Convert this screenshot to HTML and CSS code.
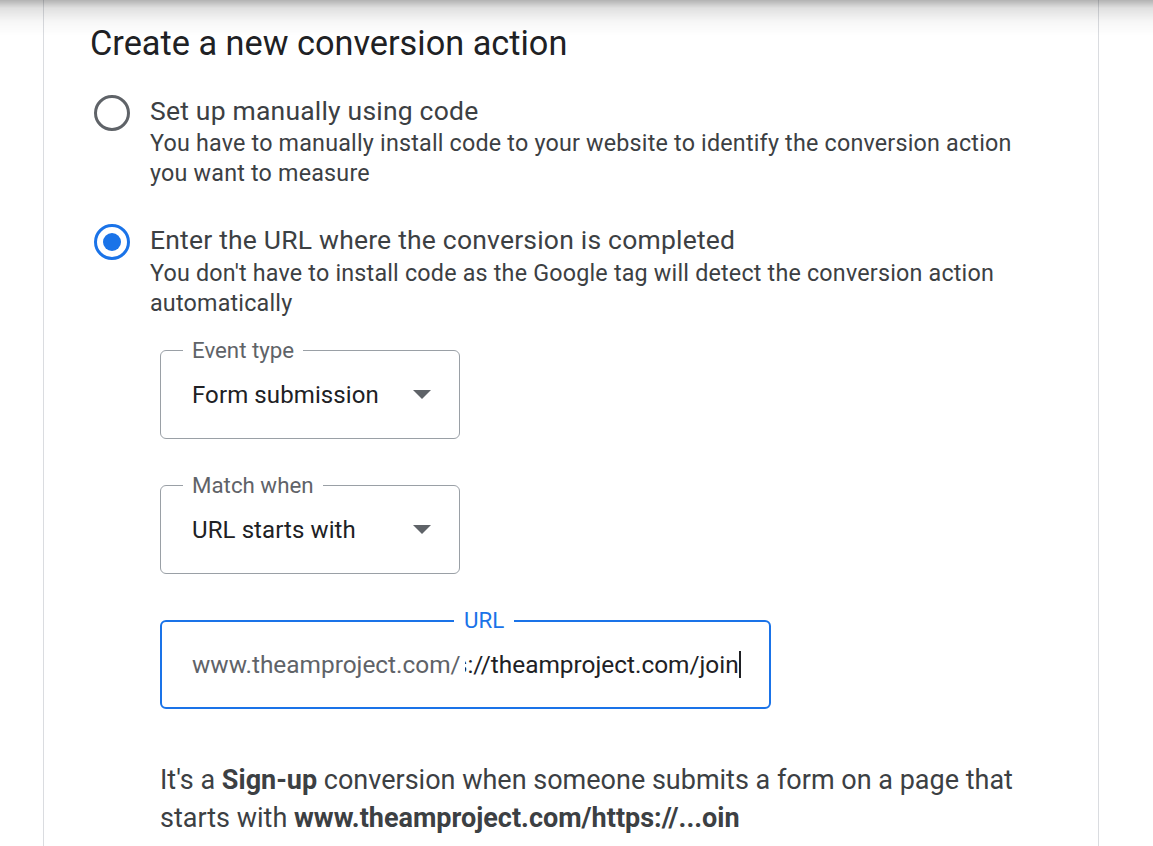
FILE: index.html
```html
<!DOCTYPE html>
<html lang="en">
<head>
<meta charset="utf-8">
<title>Create a new conversion action</title>
<link rel="stylesheet" href="styles.css">
</head>
<body>
<div class="topshade"></div>
<main class="panel">
  <h1 class="title">Create a new conversion action</h1>

  <div class="option">
    <span class="radio"></span>
    <div class="option-text">
      <div class="option-label">Set up manually using code</div>
      <div class="option-desc">You have to manually install code to your website to identify the conversion action you want to measure</div>
    </div>
  </div>

  <div class="option option-second">
    <span class="radio radio-on"></span>
    <div class="option-text">
      <div class="option-label">Enter the URL where the conversion is completed</div>
      <div class="option-desc">You don't have to install code as the Google tag will detect the conversion action automatically</div>
    </div>
  </div>

  <div class="fields">
    <div class="outlined select">
      <span class="float-label">Event type</span>
      <span class="value">Form submission</span>
      <span class="arrow"></span>
    </div>
    <div class="outlined select">
      <span class="float-label">Match when</span>
      <span class="value">URL starts with</span>
      <span class="arrow"></span>
    </div>
    <div class="outlined url focused">
      <span class="float-label url-label">URL</span>
      <span class="prefix">www.theamproject.com/</span>
      <span class="scroller"><span class="typed">https://theamproject.com/join</span></span>
      <span class="caret"></span>
    </div>
  </div>

  <p class="summary">It's a <b>Sign-up</b> conversion when someone submits a form on a page that starts with <b>www.theamproject.com/https://...oin</b></p>
</main>
</body>
</html>
```

FILE: styles.css
```css
* { box-sizing: border-box; }
html, body { margin: 0; padding: 0; background: #fff; }
body {
  font-family: Roboto, "Noto Sans", Arial, sans-serif;
  color: #3c4043;
  height: 846px;
  overflow: hidden;
}
.topshade {
  position: fixed;
  top: 0; left: 0; right: 0;
  height: 36px;
  background: linear-gradient(to bottom, rgba(0,0,0,0.30) 0px, rgba(0,0,0,0.12) 8px, rgba(0,0,0,0.03) 22px, rgba(0,0,0,0) 36px);
  pointer-events: none;
  z-index: 5;
}
.panel {
  margin-left: 43px;
  width: 1056px;
  min-height: 846px;
  border-left: 1px solid #dadce0;
  border-right: 1px solid #dadce0;
  padding: 23px 0 0 46px;
}
.title {
  margin: 0;
  font-weight: 400;
  font-size: 34.3px;
  line-height: 40px;
  color: #202124;
}
.option {
  display: flex;
  align-items: flex-start;
  margin-top: 32px;
}
.option-second { margin-top: 36px; }
.option-second .option-desc { margin-top: 3px; }
.radio {
  flex: none;
  width: 36px;
  height: 36px;
  margin: 0 20px 0 4px;
  border: 3px solid #5f6368;
  border-radius: 50%;
  display: flex;
  align-items: center;
  justify-content: center;
}
.radio-on { border-color: #1a73e8; }
.radio-on::after {
  content: "";
  width: 18px;
  height: 18px;
  border-radius: 50%;
  background: #1a73e8;
}
.option-text { padding-top: 1px; }
.option-label {
  font-size: 26.5px;
  line-height: 30px;
  color: #3c4043;
  letter-spacing: 0.2px;
}
.option-desc {
  font-size: 23.3px;
  line-height: 30px;
  color: #3c4043;
  letter-spacing: 0.2px;
  max-width: 880px;
  margin-top: 2px;
}
.fields {
  margin-left: 70px;
  padding-top: 32px;
  display: flex;
  flex-direction: column;
  gap: 46px;
}
.outlined {
  position: relative;
  height: 89px;
  border: 1px solid #9aa0a6;
  border-radius: 6px;
  display: flex;
  align-items: center;
  padding: 0 0 0 31px;
}
.select { width: 300px; }
.float-label {
  position: absolute;
  top: -14px;
  left: 22px;
  padding: 0 9px;
  background: #fff;
  font-size: 22.3px;
  line-height: 26px;
  color: #5f6368;
}
.value {
  flex: 1;
  font-size: 24px;
  color: #202124;
  letter-spacing: 0.1px;
}
.arrow {
  flex: none;
  width: 0;
  height: 0;
  border-left: 9px solid transparent;
  border-right: 9px solid transparent;
  border-top: 9px solid #5f6368;
  margin-right: 28px;
}
.url {
  width: 611px;
  border: 2px solid #1a73e8;
  padding-left: 30px;
}
.url-label {
  left: 292px;
  top: -15px;
  padding: 0 10px;
  color: #1a73e8;
}
.prefix {
  font-size: 24.4px;
  color: #5f6368;
  white-space: nowrap;
}
.scroller {
  display: flex;
  justify-content: flex-end;
  overflow: hidden;
  width: 274px;
  margin-left: 4px;
}
.typed {
  font-size: 24.4px;
  color: #202124;
  white-space: nowrap;
  flex: none;
}
.caret {
  width: 2px;
  height: 27px;
  background: #202124;
}
.summary {
  margin: 52px 0 0 70px;
  font-size: 27px;
  line-height: 38px;
  color: #3c4043;
  max-width: 900px;
}
.summary b { font-weight: 700; color: #3c4043; }
```
